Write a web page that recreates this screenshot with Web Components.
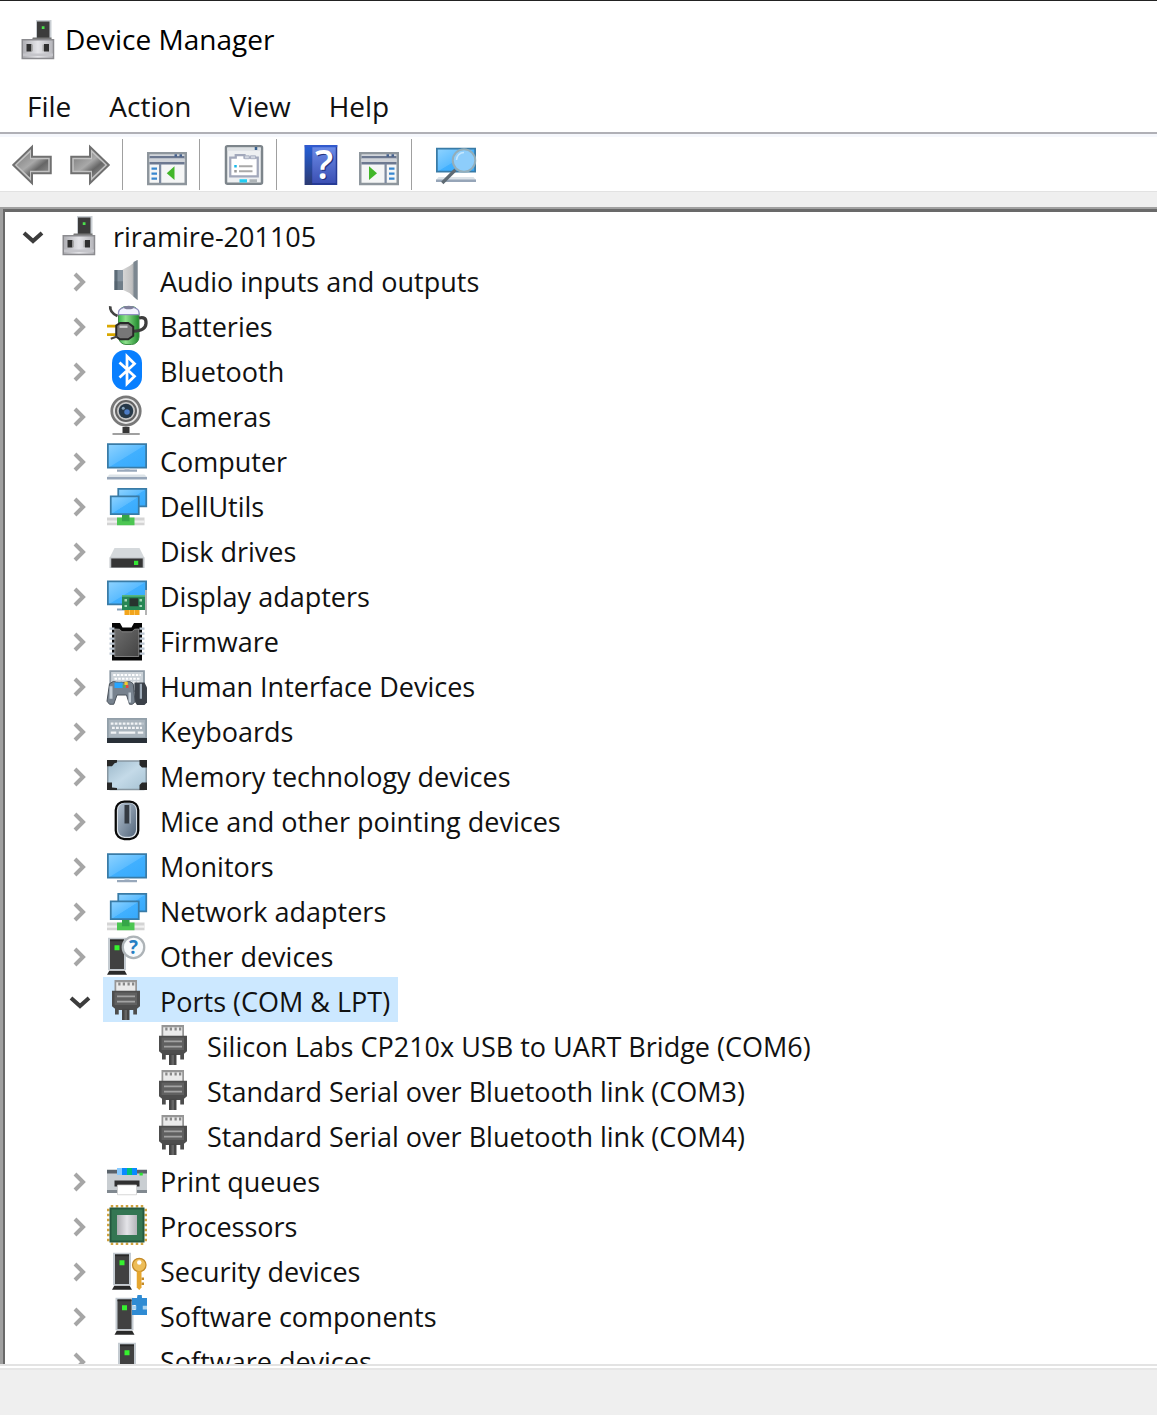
<!DOCTYPE html>
<html lang="en">
<head>
<meta charset="utf-8">
<title>Device Manager</title>
<style>
html, body { margin: 0; height: 100%; }
body { font-family: "Open Sans", "Noto Sans", sans-serif; font-size: 28px; line-height: 45px; color: #111; background: #fff; overflow: hidden; }
</style>
</head>
<body>
<device-manager></device-manager>
<script>
const DEFS = `<defs>
<linearGradient id="scr" x1="0" y1="0" x2="1" y2="1"><stop offset="0" stop-color="#8fd3ff"/><stop offset=".5" stop-color="#5cbcff"/><stop offset=".52" stop-color="#41b0ff"/><stop offset="1" stop-color="#35a9fb"/></linearGradient>
<linearGradient id="metal" x1="0" y1="0" x2="1" y2="0"><stop offset="0" stop-color="#adadb2"/><stop offset=".5" stop-color="#e4e4e8"/><stop offset="1" stop-color="#b4b4b9"/></linearGradient>
<linearGradient id="cone" x1="0" y1="0" x2="1" y2="0"><stop offset="0" stop-color="#d8d8d8"/><stop offset=".6" stop-color="#c2c2c2"/><stop offset="1" stop-color="#8e9499"/></linearGradient>
<linearGradient id="arr" x1="0" y1="0" x2="1" y2="1"><stop offset="0" stop-color="#7b7b7b"/><stop offset=".45" stop-color="#a9a9a9"/><stop offset=".65" stop-color="#666"/><stop offset="1" stop-color="#9a9a9a"/></linearGradient>
<linearGradient id="help" x1="0" y1="0" x2="0" y2="1"><stop offset="0" stop-color="#6b8be6"/><stop offset="1" stop-color="#3c50b4"/></linearGradient>
<linearGradient id="spine" x1="0" y1="0" x2="0" y2="1"><stop offset="0" stop-color="#2460da"/><stop offset="1" stop-color="#2c3a72"/></linearGradient>
<linearGradient id="mouse" x1="0" y1="0" x2="1" y2="1"><stop offset="0" stop-color="#b3c1d0"/><stop offset="1" stop-color="#54677c"/></linearGradient>
<linearGradient id="grn" x1="0" y1="0" x2="1" y2="0"><stop offset="0" stop-color="#39b54a"/><stop offset=".35" stop-color="#8ee08c"/><stop offset="1" stop-color="#1f8a2c"/></linearGradient>
<linearGradient id="dark" x1="0" y1="0" x2="1" y2="1"><stop offset="0" stop-color="#6d6d6d"/><stop offset="1" stop-color="#444"/></linearGradient>
<linearGradient id="mem" x1="0" y1="0" x2="1" y2="1"><stop offset="0" stop-color="#9db9cb"/><stop offset=".5" stop-color="#c4dae8"/><stop offset="1" stop-color="#a6c2d3"/></linearGradient>
</defs>`;
const NETWORK = `<path d="M4.500 1.500h11.200v7H4.500z" fill="url(#scr)" stroke="#397ba6" stroke-width=".7"/><path d="M1.500 4.500h11.200v7.100H1.500z" fill="url(#scr)" stroke="#397ba6" stroke-width=".7"/><path d="M0 13h15v3.100H0z" fill="#d4d4d4"/><path d="M0 14.200h15v.9H0z" fill="#f1f1f1"/><path d="M4 13h7v3.100H4z" fill="#4cc652"/><path d="M6 12h3v2.500H6z" fill="#35a648"/>`;
const tower = (x, y) => `<g transform="translate(${x} ${y})"><path d="M.4 0h7.200v13H.4z" fill="#c4cbd1"/><path d="M1.200 .7h5.600v11.800H1.200z" fill="#414141"/><path d="M1.200 .7h5.600v.7H1.200z" fill="#282828"/><path d="M3 3h2v2H3z" fill="#36f22f"/><path d="M.9 13.200h6.200l.9 1.600H0z" fill="#292929"/></g>`;
const ICONS = {
computer_root: `<path d="M6.800.4h6.200v8H6.800z" fill="#c9ced3"/><path d="M7.200 1h5v7.300h-5z" fill="#3c3c3c"/><path d="M9.100 2.900h1.100V4H9.100z" fill="#4be34b"/><path d="M5.500 7.400H13V9H5z" fill="#777"/><path d="M1.300 8.300h12.500v7.500H1.300z" fill="url(#metal)" stroke="#8b8b8f" stroke-width=".6"/><path d="M1.600 13.800h12v1h-12z" fill="#c5c5ca"/><path d="M3 10h2v3H3zM10 10h2v3h-2z" fill="#303030"/><path d="M5 10.200h.6v2.700H5zM9.400 10.200h.6v2.700h-.6z" fill="#aaa"/>`,
audio: `<path d="M12.200 0v16L9 13.200 6 11.800V4L9 2.400z" fill="url(#cone)"/><path d="M3 4h3.400v8H3z" fill="#8694a0"/><path d="M3 4h1.200v8H3z" fill="#5d6c78"/><path d="M3 8.500h3.400V12H3z" fill="#4d5963" opacity=".4"/><path d="M10.600.8l1.600-.8v16l-1.600-1.400z" fill="#7c8790"/>`,
battery: `<rect x="4.600" y=".6" width="8.200" height="15.200" rx="3" fill="url(#grn)" stroke="#3f8c46" stroke-width=".4"/><path d="M4.600 3.800V3c0-3 8.200-3 8.200 0v.8z" fill="#f3f3ff" stroke="#9290c1" stroke-width=".5"/><ellipse cx="8.700" cy="1" rx="2" ry=".7" fill="#80809b"/><path d="M1.300.5Q1 3 4.200 4.400" fill="none" stroke="#434343" stroke-width="1.100"/><path d="M12.800 5.200q3-.8 2.800 2.200t-5 3.100" fill="none" stroke="#3d3d3d" stroke-width="1.300"/><path d="M0 8.400h4M0 11.800h4" stroke="#d9a800" stroke-width="1.100"/><path d="M3.700 8.200l1.500-1h3.300l2 1.500v3.600l-2 1.400H5.200l-1.500-1z" fill="#777" stroke="#282828" stroke-width=".8"/><path d="M5 8.700h3.200" stroke="#ccc" stroke-width=".9"/><path d="M1.500 13.500l2.500-.9" stroke="#444" stroke-width=".8"/>`,
bluetooth: `<rect x="2" y="0" width="12" height="16" rx="5.200" fill="#087fff"/><path d="M5 5l6 5.500-3 3V2.500l3 3L5 11" fill="none" stroke="#fff" stroke-width="1.100"/>`,
camera: `<circle cx="7.600" cy="6.400" r="5.700" fill="#e6e6e6" stroke="#787878" stroke-width="1.100"/><circle cx="7.600" cy="6.400" r="4" fill="#c5c5c5" stroke="#636363" stroke-width=".8"/><circle cx="7.600" cy="6.400" r="2.900" fill="#263848"/><circle cx="8" cy="6.800" r="1.100" fill="#4d7cc5"/><circle cx="6.500" cy="5.300" r=".6" fill="#8aa6bd"/><path d="M6.200 12.800h2.800v2.400H6.200z" fill="#363636"/><path d="M2.200 15.200h10.900v.8H2.200z" fill="#a0a0a0"/>`,
computer: `<path d="M.35 1.600h15.300v9.400H.35z" fill="url(#scr)" stroke="#397ba6" stroke-width=".7"/><path d="M7 11.400h2v.8H7z" fill="#c7d2dd"/><path d="M4 11.800h8v.9H4z" fill="#98a8bb"/><path d="M1 13.800h14l1 1H0z" fill="#dce3e8"/><path d="M0 14.800h16v1H0z" fill="#96a5b8"/>`,
network: NETWORK,
disk: `<path d="M3 7.200h10l2 4H1z" fill="#d5d9dc"/><path d="M1 11h14v4.200H1z" fill="#c0c4c7"/><path d="M1.700 11.400h12.600V15H1.700z" fill="#353535"/><path d="M10.800 12.300h1.700V14h-1.700z" fill="#35e735"/>`,
display: `<path d="M.35 2.500h15.300v9.200H.35z" fill="url(#scr)" stroke="#397ba6" stroke-width=".7"/><path d="M4 13.400h4v.8H4z" fill="#86a1b9"/><path d="M6 8h9.200v6H6z" fill="#278755"/><path d="M6 8h9.200v.7H6z" fill="#54b57e"/><path d="M9 9.300h3.500v3.200H9z" fill="#27332e"/><path d="M7 9.600h1v1H7zM13 9.600h1v1h-1zM7 12h1v.8H7zM13 12h1v.8h-1z" fill="#a6d7b8"/><path d="M7 14h6v2H7z" fill="#f2a51c"/><path d="M9 14v2M11 14v2" stroke="#ffd272" stroke-width=".3"/><path d="M15.200 6h.8v10h-.8z" fill="#b4b4b4"/>`,
firmware: `<path d="M2 1.200h3.200l1 1.800h3.600l1-1.800H14v15H2z" fill="#070707"/><path d="M3.100 3.600L5 3.700l1 1h4l1-1 1.700-.1v11H3.100z" fill="url(#dark)" stroke="#9b9b9b" stroke-width=".3"/><path d="M1 3.400h2m-2 2h2m-2 2h2m-2 2h2m-2 2h2m-2 2h2" stroke="#bdc8d4" stroke-width=".9"/><path d="M13 3.400h2m-2 2h2m-2 2h2m-2 2h2m-2 2h2m-2 2h2" stroke="#bdc8d4" stroke-width=".9"/>`,
hid: `<path d="M1.300 2.400h13.500v8H1.300z" fill="#cbd2d8" stroke="#8f9ba6" stroke-width=".7"/><path d="M2.500 4h11M3 5.500h10M3 7h10" stroke="#fff" stroke-width=".8" stroke-dasharray="1 .5"/><path d="M11 7h4l1 2v6l-1 1h-3l-1-1.500z" fill="#3b4149"/><path d="M13.100 7.500h.9v6h-.9z" fill="#9daab7"/><path d="M1 7.500q1.500-1.500 3-.6h3.500q2-.8 3 .8l.7 7-1 1H9L7.800 12H4l-1.300 3.700H1L0 14.500z" fill="#77828e" stroke="#4a525b" stroke-width=".4"/><path d="M3 7h3.300v2.200H3z" fill="#27a5ff"/><path d="M7 6.700h1.300V8H7z" fill="#f2ca2d"/><path d="M6.300 8h1v1h-1z" fill="#52b350"/><path d="M7.600 8h1v1.200h-1z" fill="#e64940"/><path d="M1 8.500h1.200v5H1zM8.600 11h1v4h-1z" fill="#c2ccd5"/>`,
keyboard: `<g transform="translate(0 2)"><path d="M0 1.200h16v10H0z" fill="#929fa9"/><path d="M.7 1.900h14.600v7H.7z" fill="#a9b4bd"/><path d="M1.500 3.400h13M2 5.100h12" stroke="#f2f4f6" stroke-width=".9" stroke-dasharray="1.100 .5"/><path d="M1.500 7h2.200m1 0h6.600m1 0h2.200" stroke="#f2f4f6" stroke-width=".9"/><path d="M0 9.200h16v2H0z" fill="#293038"/></g>`,
memory: `<rect x=".3" y="2.400" width="15.400" height="11.400" rx="1" fill="url(#mem)" stroke="#8897a1" stroke-width=".6"/><path d="M0 2h4v1L3 3.300 2 4.500H0zM16 2h-3v2l1 1h2zM0 14h4v-.8L2 13v-2H0zM16 14h-3v-2l1-1h2z" fill="#282828"/>`,
mouse: `<rect x="3.500" y=".6" width="9" height="15" rx="3.400" fill="#d9e0e7" stroke="#090909" stroke-width=".9"/><rect x="4.400" y="1.200" width="7.200" height="13.500" rx="2.800" fill="url(#mouse)"/><path d="M7 2h2v7.400H7z" fill="#343a42"/><path d="M9 2h.6v7.400H9z" fill="#a2b0be"/>`,
monitor: `<g transform="translate(0 2)"><path d="M.35 1.600h15.300v9.400H.35z" fill="url(#scr)" stroke="#397ba6" stroke-width=".7"/><path d="M7 11.400h2v.8H7z" fill="#c7d2dd"/><path d="M4 12h8v.9H4z" fill="#98a8bb"/></g>`,
other: `${tower(0, 1.1)}<circle cx="10.600" cy="4.900" r="4.300" fill="#f7f9fb" stroke="#adb3b7" stroke-width=".9"/><text x="10.600" y="7.700" text-anchor="middle" font-size="7.500" font-weight="700" fill="#257ec3">?</text>`,
port: `<path d="M3 0h9v4.500H3z" fill="#969696"/><path d="M3.700.9h7.600v3.600H3.700z" fill="#eaeaea"/><path d="M4.500 1h.9v1.200h-.9zM6.300 1h.9v1.200h-.9zM8.200 1h.9v1.200h-.9zM10 1h.9v1.200H10z" fill="#888"/><path d="M2 4.300h11.200v6.200l-1.200 1v2.300h-1.500V12H4.700v1.800H3.200v-2.300L2 10.500z" fill="#4d4d4d"/><path d="M3 5h9v5H3z" fill="#606060"/><path d="M4 6.500h7.200M4 8.600h7.200" stroke="#a2a2a2" stroke-width=".7"/><path d="M6 11.500h3V16H6z" fill="#464646"/><path d="M7 12h1v4H7z" fill="#656565"/>`,
printer: `<path d="M0 3.900h16v2H0z" fill="#5a636b"/><path d="M0 5.400h16v7.600H0z" fill="#c9ced2"/><path d="M0 12h4.200v1.200H0zM11.800 12H16v1.200h-4.200z" fill="#818990"/><path d="M4 3.200h8V6H4z" fill="#098aff"/><path d="M4 3.200h2V6H4z" fill="#87caff"/><path d="M8 3.200h2V6H8z" fill="#00c07c"/><path d="M13 5.100h1.300v1.100H13z" fill="#2de634"/><path d="M3 8.200h10v2.400H3z" fill="#303030"/><path d="M4.200 10h7.600v3.900H4.200z" fill="#fff" stroke="#c9c9c9" stroke-width=".3"/>`,
processor: `<path d="M1.500 .5h13M1.500 15.500h13M.5 1.500v13M15.500 1.500v13" stroke="#d0a23f" stroke-width="1" stroke-dasharray="1 1"/><path d="M1 1h14v14H1z" fill="#24583f"/><path d="M1.800 1.800h12.400v12.400H1.800z" fill="#347653"/><path d="M4 4h8v8H4z" fill="url(#metal)"/>`,
security: `${tower(2, 1.1)}<circle cx="12.900" cy="6" r="2.700" fill="#edbd58" stroke="#c38a27" stroke-width=".5"/><circle cx="12.900" cy="5" r=".9" fill="#fff"/><path d="M11.900 8.500h1.900V15l-.9 1-1-1z" fill="#e6a62e"/><path d="M13.800 11h1v1h-1zm0 2h1v1h-1z" fill="#c58a25"/>`,
component: `${tower(3, 1.1)}<path d="M10 1.200h2L12.200 0h1.700L14 1.200h2V8h-6V6h1.500V4H10z" fill="#2f8bd3"/><path d="M10 4.300h1.700v1.500H10zM14.300 4.300H16v1.500h-1.700z" fill="#a9d3f1"/>`,
device: `${tower(4, 1.1)}`,
back: `<path d="M.5 8L8 .7v4h7.500v6.600H8v4z" fill="#c3c3c3" stroke="#707070" stroke-width=".8"/><path d="M1.900 8L7.200 3v2.700h7.300v4.600H7.200V13z" fill="url(#arr)"/>`,
forward: `<path d="M15.500 8L8 .7v4H.5v6.600H8v4z" fill="#c3c3c3" stroke="#707070" stroke-width=".8"/><path d="M14.100 8L8.800 3v2.700H1.500v4.600h7.300V13z" fill="url(#arr)"/>`,
tree: `<path d="M.5 3.300h15v12.300H.5z" fill="#f5f6f6" stroke="#8e969d" stroke-width="1"/><path d="M1 4.300h14v1.100H1zM1 6.800h14v1H1z" fill="#6c7890"/><path d="M1 5.500h14v1.300H1z" fill="#d0d3d8"/><path d="M11 3.700h1v1h-1zm2 0h1v1h-1z" fill="#47628d"/><path d="M4.800 7.500h.9v7.700h-.9z" fill="#7d8ba1"/><path d="M1.800 9.400H4M1.800 11.400H4M1.800 13.400H4" stroke="#3987cf" stroke-width=".9"/><path d="M7.900 11.300L11 8.500V14z" fill="#42b729"/>`,
properties: `<rect x=".8" y=".5" width="14.400" height="15" rx=".6" fill="#eef0f2" stroke="#7d858b" stroke-width="1"/><path d="M1.300 1h13.400v1.300H1.300z" fill="#dde1e4"/><path d="M12.300.8h1v1.200h-1z" fill="#37608f"/><path d="M2.500 5h2.200V4h3.500v1h5.300v7.500h-11z" fill="#fff" stroke="#a2a8bb" stroke-width=".9"/><path d="M8.200 4.300h1.900v1.200H8.200zM10.600 4.300h2v1.200h-2z" fill="#d2d7e1" stroke="#a2a8bb" stroke-width=".3"/><path d="M4.100 8h1v1h-1z" fill="#17b9eb"/><path d="M4.100 10h1v1h-1z" fill="#999"/><path d="M6 8.500h5.400M6 10.500h5.400" stroke="#a9a9a9" stroke-width=".8"/><path d="M6.200 13.700h3V15h-3z" fill="#22cdf2"/><path d="M10.200 13.700h3V15h-3z" fill="#aeb4b8"/>`,
help: `<path d="M1.500 0h13v16h-13z" fill="#263b96"/><path d="M1.500 0h3v16h-3z" fill="url(#spine)"/><path d="M4.500 .8h9.400v14.400H4.500z" fill="url(#help)"/><path d="M1.500 0h13v.9h-13z" fill="#3159cd"/><text x="9.700" y="14.100" text-anchor="middle" font-size="16" font-weight="600" fill="#26357d">?</text><text x="9.200" y="13.700" text-anchor="middle" font-size="16" font-weight="600" fill="#fff">?</text>`,
action: `<path d="M.5 3.300h15v12.300H.5z" fill="#f5f6f6" stroke="#8e969d" stroke-width="1"/><path d="M1 4.300h14v1.100H1zM1 6.800h14v1H1z" fill="#6c7890"/><path d="M1 5.500h14v1.300H1z" fill="#d0d3d8"/><path d="M11 3.700h1v1h-1zm2 0h1v1h-1z" fill="#47628d"/><path d="M10.200 7.500h.9v7.700h-.9z" fill="#7d8ba1"/><path d="M12 9.400h2.200M12 11.400h2.200M12 13.400h2.200" stroke="#3987cf" stroke-width=".9"/><path d="M7.200 11.300L4 8.500V14z" fill="#42b729"/>`,
scan: `<path d="M.35 1.400h15.300v9.200H.35z" fill="url(#scr)" stroke="#397ba6" stroke-width=".7"/><path d="M1 12.800h14l1 1.200H0z" fill="#dce3e8"/><path d="M0 13.800h16v1H0z" fill="#96a5b8"/><path d="M7.800 9.900L2.500 15.200" stroke="#5e6a73" stroke-width="1.300"/><circle cx="11.200" cy="6.200" r="4.500" fill="#8dcdfb" stroke="#93aeba" stroke-width=".8"/><path d="M8.200 6a3 3 0 0 1 3-3" fill="none" stroke="#c5e7ff" stroke-width=".6"/>`
};

class DmIcon extends HTMLElement {
  connectedCallback() {
    this.attachShadow({ mode: "open" }).innerHTML = `<style>:host{display:block;flex:none;width:40px;height:40px}svg{display:block;width:100%;height:100%;overflow:visible;font-family:"Open Sans",sans-serif}</style><svg viewBox="0 0 16 16" aria-hidden="true">${DEFS}${ICONS[this.getAttribute("name")] || ""}</svg>`;
  }
}
customElements.define("dm-icon", DmIcon);

class DmTitle extends HTMLElement {
  connectedCallback() {
    this.attachShadow({ mode: "open" }).innerHTML = `<style>
:host{display:block;background:#fff;border-top:1px solid #222}
header{display:flex;align-items:center;gap:6px;padding:17px 19px 22px}
h1{margin:0;font:inherit;line-height:39px;padding-top:2px;color:#000}
</style><header><dm-icon name="computer_root"></dm-icon><h1><slot></slot></h1></header>`;
  }
}
customElements.define("dm-title", DmTitle);

class DmMenu extends HTMLElement {
  connectedCallback() {
    const items = this.getAttribute("items").split(",");
    this.attachShadow({ mode: "open" }).innerHTML = `<style>
:host{display:block;border-bottom:2px solid #b0b0b6}
nav{display:flex;padding:3px 8px 4px}
button{font:inherit;line-height:44px;color:inherit;background:none;border:0;margin:0;padding:0 19px}
</style><nav aria-label="Menu">${items.map(i => `<button type="button">${i}</button>`).join("")}</nav>`;
  }
}
customElements.define("dm-menu", DmMenu);

class DmToolbar extends HTMLElement {
  connectedCallback() {
    const button = (icon, label) => `<button type="button" aria-label="${label}"><dm-icon name="${icon}"></dm-icon></button>`;
    this.attachShadow({ mode: "open" }).innerHTML = `<style>
:host{display:block;border-top:3px solid #f5f7fc;background:#fff}
.bar{display:flex;padding:2px 12px 1px}
.group{display:flex;gap:18px;align-items:center;padding:6px 12px 5px 24px}
.group:first-child{padding-left:0}
.group + .group{border-left:1px solid #a0a0a0}
button{display:block;border:0;background:none;margin:0;padding:0}
</style><div class="bar" role="toolbar" aria-label="Tools">
<div class="group">${button("back", "Back")}${button("forward", "Forward")}</div>
<div class="group">${button("tree", "Show console tree")}</div>
<div class="group">${button("properties", "Properties")}</div>
<div class="group">${button("help", "Help")}${button("action", "Show action pane")}</div>
<div class="group">${button("scan", "Scan for hardware changes")}</div>
</div>`;
  }
}
customElements.define("dm-toolbar", DmToolbar);

class DmRow extends HTMLElement {
  connectedCallback() {
    const level = Number(this.getAttribute("level"));
    const state = this.getAttribute("state");
    this.setAttribute("role", "treeitem");
    this.setAttribute("aria-level", level + 1);
    const arrow = state === "open"
      ? `<path d="M12 18l9 8 9-8" stroke="#3c3c3c"/>`
      : `<path d="M16 14l8 8-8 8" stroke="#a6a6a6"/>`;
    this.style.setProperty("--level", level);
    this.attachShadow({ mode: "open" }).innerHTML = `<style>
:host{display:flex;align-items:center;gap:4px;height:45px;padding-left:calc(7px + var(--level) * 47px)}
button,.blank{flex:none;width:40px;height:40px;padding:0;border:0;background:none}
svg{display:block;width:40px;height:40px;fill:none;stroke-width:4}
.item{display:flex;align-items:center;gap:13px;padding:0 8px 0 4px}
:host([selected]) .item{background:#cce8ff}
.label{white-space:nowrap;font-size:27px;line-height:41px;padding-top:4px}
</style>${state ? `<button type="button" aria-label="Toggle"><svg viewBox="0 0 40 40">${arrow}</svg></button>` : `<span class="blank"></span>`}<span class="item"><dm-icon name="${this.getAttribute("icon")}"></dm-icon><span class="label"><slot></slot></span></span>`;
  }
}
customElements.define("dm-row", DmRow);

const DEVICES = [
[0, "computer_root", "riramire-201105", "open"],
[1, "audio", "Audio inputs and outputs", "closed"],
[1, "battery", "Batteries", "closed"],
[1, "bluetooth", "Bluetooth", "closed"],
[1, "camera", "Cameras", "closed"],
[1, "computer", "Computer", "closed"],
[1, "network", "DellUtils", "closed"],
[1, "disk", "Disk drives", "closed"],
[1, "display", "Display adapters", "closed"],
[1, "firmware", "Firmware", "closed"],
[1, "hid", "Human Interface Devices", "closed"],
[1, "keyboard", "Keyboards", "closed"],
[1, "memory", "Memory technology devices", "closed"],
[1, "mouse", "Mice and other pointing devices", "closed"],
[1, "monitor", "Monitors", "closed"],
[1, "network", "Network adapters", "closed"],
[1, "other", "Other devices", "closed"],
[1, "port", "Ports (COM &amp; LPT)", "open", "selected"],
[2, "port", "Silicon Labs CP210x USB to UART Bridge (COM6)", ""],
[2, "port", "Standard Serial over Bluetooth link (COM3)", ""],
[2, "port", "Standard Serial over Bluetooth link (COM4)", ""],
[1, "printer", "Print queues", "closed"],
[1, "processor", "Processors", "closed"],
[1, "security", "Security devices", "closed"],
[1, "component", "Software components", "closed"],
[1, "device", "Software devices", "closed"]
];

class DmTree extends HTMLElement {
  connectedCallback() {
    this.attachShadow({ mode: "open" }).innerHTML = `<style>
:host{display:block;overflow:hidden;border-left:3px solid #a0a0a0;border-top:2px solid #a0a0a0;background:#fff}
.inner{border-left:2px solid #696969;border-top:3px solid #696969}
</style><div class="inner" role="tree" aria-label="Devices">${DEVICES.map(([level, icon, text, state, selected = ""]) => `<dm-row level="${level}" icon="${icon}" state="${state}" ${selected}>${text}</dm-row>`).join("")}</div>`;
  }
}
customElements.define("dm-tree", DmTree);

class DeviceManager extends HTMLElement {
  connectedCallback() {
    this.attachShadow({ mode: "open" }).innerHTML = `<style>
:host{display:flex;flex-direction:column;height:100vh}
dm-title,dm-menu,dm-toolbar{flex:none}
main{flex:1;min-height:0;display:flex;flex-direction:column;background:#efefef;border-top:1px solid #e2e2e2;padding-top:15px}
dm-tree{flex:1;min-height:0}
footer{flex:none;height:45px;background:#efefef;border-top:2px solid #e6e6e6}
.edge{flex:none;height:2px;background:#fff;border-top:2px solid #e3e3e3}
</style>
<dm-title>Device Manager</dm-title>
<dm-menu items="File,Action,View,Help"></dm-menu>
<dm-toolbar></dm-toolbar>
<main><dm-tree></dm-tree></main>
<div class="edge"></div>
<footer></footer>`;
  }
}
customElements.define("device-manager", DeviceManager);
</script>
</body>
</html>
